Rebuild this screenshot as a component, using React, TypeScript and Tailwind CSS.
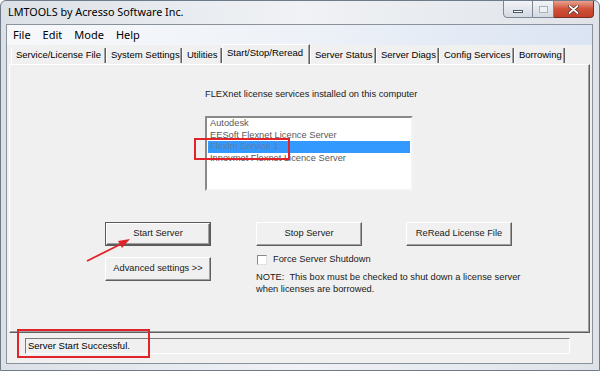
import React from "react";

const tabs: [string, number][] = [
    ["Service/License File", 95],
    ["System Settings", 76],
    ["Utilities", 40],
    ["Start/Stop/Reread", 88],
    ["Server Status", 66],
    ["Server Diags", 63],
    ["Config Services", 75],
    ["Borrowing", 51],
];

const services = [
    "Autodesk",
    "EESoft Flexnet Licence Server",
    "Flexlm Service 1",
    "Innovmet Flexnet Licence Server",
];

const small = { fontFamily: '"Liberation Sans", Arial, sans-serif' };
const ui = { fontFamily: '"Noto Sans", "Open Sans", sans-serif' };

function WinButton({
    label,
    isDefault,
}: {
    label: string;
    isDefault?: boolean;
}) {
    return (
        <div
            className={`h-[24px] w-[106px] ${
                isDefault ? "border border-[#5a5a5a]" : ""
            }`}
        >
            <div className="h-full w-full border-t border-l border-white border-r border-b border-r-[#5f5f5f] border-b-[#5f5f5f] bg-[#f0f0f0] shadow-[inset_-1px_-1px_0_#a0a0a0] flex items-center justify-center text-[9.3px] text-[#1a1a1a] whitespace-nowrap">
                {label}
            </div>
        </div>
    );
}

export default function App() {
    return (
        <div
            className="relative w-[600px] h-[371px] overflow-hidden bg-gradient-to-r from-[#dce1e7] via-[#f0f2f5] to-[#dfe3e8] border border-[#6f7b88] rounded-t-[6px] flex flex-col"
            style={small}
        >
            {/* title bar */}
            <div className="h-[23px] flex items-start justify-between shrink-0">
                <span
                    className="pl-[7px] pt-[6px] text-[10.8px] text-black leading-none"
                    style={ui}
                >
                    LMTOOLS by Acresso Software Inc.
                </span>
                <div className="flex mr-[5px] -mt-px">
                    <div className="w-[30px] h-[18px] rounded-bl-[4px] border border-[#7d8896] bg-gradient-to-b from-[#f2f4f7] to-[#d3d9e1] flex items-center justify-center">
                        <div className="w-[10px] h-[3px] border border-[#4d5866] bg-white mt-[5px]" />
                    </div>
                    <div className="w-[21px] h-[18px] border-y border-r border-[#7d8896] bg-gradient-to-b from-[#f2f4f7] to-[#d3d9e1] flex items-center justify-center">
                        <div className="w-[9px] h-[7px] border border-[#a9b2bd] bg-[#eef1f4]" />
                    </div>
                    <div className="w-[40px] h-[18px] rounded-br-[4px] border-y border-r border-[#7a2d22] bg-gradient-to-b from-[#e8a08f] via-[#d0503a] to-[#c2402a] flex items-center justify-center">
                        <svg width="11" height="9" viewBox="0 0 11 9">
                            <path
                                d="M1.5 1 L9.5 8 M9.5 1 L1.5 8"
                                stroke="#3b1a14"
                                strokeWidth="3"
                                strokeLinecap="round"
                            />
                            <path
                                d="M1.5 1 L9.5 8 M9.5 1 L1.5 8"
                                stroke="#ffffff"
                                strokeWidth="1.8"
                                strokeLinecap="round"
                            />
                        </svg>
                    </div>
                </div>
            </div>

            {/* window body */}
            <div className="flex-1 ml-[5px] mr-[6px] bg-[#f0f0f0] border border-[#8a929c] flex flex-col">
                {/* menu */}
                <div
                    className="h-[20px] flex items-center gap-[12px] pl-[6px] bg-gradient-to-r from-[#f7f8fa] via-[#eef2f8] to-[#dbe4f3] text-[11px] text-black"
                    style={ui}
                >
                    <span>File</span>
                    <span>Edit</span>
                    <span>Mode</span>
                    <span>Help</span>
                </div>

                {/* tabs */}
                <div className="h-[19px] flex items-end pl-[4px] text-[9.5px] text-black">
                    {tabs.map(([t, w]) => {
                        const active = t === "Start/Stop/Reread";
                        return (
                            <div
                                key={t}
                                style={{ width: w }}
                                className={`flex items-center pl-[4px] whitespace-nowrap border-r border-r-[#5f5f5f] border-l border-l-white shadow-[inset_-1px_0_0_#a0a0a0] ${
                                    active
                                        ? "h-[20px] pb-[3px] bg-[#f0f0f0] border-t border-t-white"
                                        : "h-[15px] mb-px"
                                }`}
                            >
                                {t}
                            </div>
                        );
                    })}
                </div>

                {/* panel */}
                <div className="h-[269px] ml-[2px] mr-[2px] border-t border-l border-white border-r border-b border-r-[#5f5f5f] border-b-[#5f5f5f] shadow-[inset_-1px_-1px_0_#a0a0a0] flex flex-col text-[9.3px] text-[#1a1a1a]">
                    <div className="pl-[195px] pt-[23px] leading-[12px] whitespace-nowrap">
                        FLEXnet license services installed on this computer
                    </div>
                    <div className="relative ml-[195px] mt-[16px] w-[208px] h-[75px] bg-white border-2 border-t-[#8a8a8a] border-l-[#8a8a8a] border-b-[#f4f4f4] border-r-[#f4f4f4] px-[1px]">
                        {services.map((s) => (
                            <div
                                key={s}
                                className={`h-[11.6px] leading-[11.6px] pl-[2px] whitespace-nowrap ${
                                    s === "Flexlm Service 1"
                                        ? "bg-[#3399ff] text-[#5d7fa6]"
                                        : "text-[#5a5a5a]"
                                }`}
                            >
                                {s}
                            </div>
                        ))}
                    </div>

                    <div className="flex mt-[31px] pl-[95px]">
                        <div className="flex flex-col gap-[11px]">
                            <WinButton label="Start Server" isDefault />
                            <WinButton label="Advanced settings >>" />
                        </div>
                        <div className="flex flex-col ml-[45px]">
                            <div className="flex gap-[44px]">
                                <WinButton label="Stop Server" />
                                <WinButton label="ReRead License File" />
                            </div>
                            <div className="flex items-center mt-[8px] h-[11px]">
                                <div className="w-[10px] h-[10px] bg-white border border-t-[#8a8a8a] border-l-[#8a8a8a] border-b-[#e0e0e0] border-r-[#e0e0e0] ml-[1px]" />
                                <span className="ml-[6px]">
                                    Force Server Shutdown
                                </span>
                            </div>
                            <div className="mt-[6px] leading-[12px] w-[275px]">
                                NOTE:&nbsp; This box must be checked to shut
                                down a license server when licenses are
                                borrowed.
                            </div>
                        </div>
                    </div>
                </div>

                {/* status */}
                <div className="flex-1 flex items-start pt-[5px] pl-[18px]">
                    <div className="w-[545px] h-[16px] border border-t-[#7a7a7a] border-l-[#7a7a7a] border-b-white border-r-white flex items-center pl-[2px] text-[9.5px] text-black">
                        Server Start Successful.
                    </div>
                </div>
            </div>
            <div className="h-[6px] shrink-0" />

            {/* annotations */}
            <div className="absolute left-[193px] top-[137px] w-[96px] h-[22px] border-2 border-[#e0242a]" />
            <div className="absolute left-[16px] top-[328px] w-[133px] h-[29px] border-2 border-[#e0242a]" />
            <svg
                className="absolute left-0 top-0"
                width="600"
                height="371"
                viewBox="0 0 600 371"
            >
                <line
                    x1="86"
                    y1="260"
                    x2="122"
                    y2="242"
                    stroke="#e0242a"
                    strokeWidth="1.8"
                />
                <path d="M129 238 L117 240 L121 247 Z" fill="#e0242a" />
            </svg>
        </div>
    );
}
